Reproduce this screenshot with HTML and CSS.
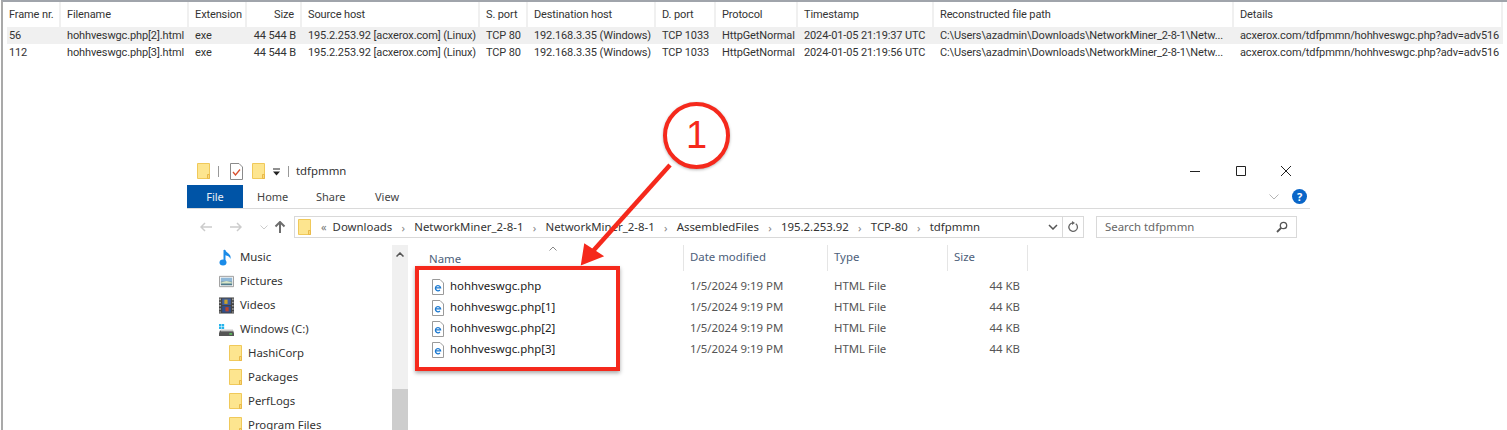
FILE: index.html
```html
<html>
  <head>
    <title>NetworkMiner files</title>
    <meta charset="utf-8">
    <link rel="stylesheet" href="styles.css">
  </head>
  <body>
    <svg class="defs" width="0" height="0">
      <symbol id="folder" viewBox="0 0 14 16">
        <path d="M.5.5h12v15H.5z" fill="#fde58f" stroke="#f0c95a"/>
        <path d="M10.5 11.5h2v4h-2z" fill="#fbd978" stroke="#e9b949"/>
      </symbol>
      <symbol id="htmlfile" viewBox="0 0 12 16">
        <path d="M.5.5h7.5l3.5 3.5v11.5H.5z" fill="#fff" stroke="#9a9a9a"/>
        <path d="M3.4 8.8h5.2a2.6 2.6 0 1 0-.7 2.2" fill="none" stroke="#1a78d0" stroke-width="1.3"/>
      </symbol>
    </svg>

    <div class="page">
      <div class="miner">
        <div class="miner-row miner-head">
          <span>Frame nr.</span><span>Filename</span><span>Extension</span><span class="num">Size</span><span>Source host</span><span>S. port</span><span>Destination host</span><span>D. port</span><span>Protocol</span><span>Timestamp</span><span>Reconstructed file path</span><span>Details</span>
        </div>
        <div class="miner-row miner-sel">
          <span>56</span><span>hohhveswgc.php[2].html</span><span>exe</span><span class="num">44 544 B</span><span>195.2.253.92 [acxerox.com] (Linux)</span><span>TCP 80</span><span>192.168.3.35 (Windows)</span><span>TCP 1033</span><span>HttpGetNormal</span><span>2024-01-05 21:19:37 UTC</span><span>C:\Users\azadmin\Downloads\NetworkMiner_2-8-1\Netw...</span><span>acxerox.com/tdfpmmn/hohhveswgc.php?adv=adv516</span>
        </div>
        <div class="miner-row">
          <span>112</span><span>hohhveswgc.php[3].html</span><span>exe</span><span class="num">44 544 B</span><span>195.2.253.92 [acxerox.com] (Linux)</span><span>TCP 80</span><span>192.168.3.35 (Windows)</span><span>TCP 1033</span><span>HttpGetNormal</span><span>2024-01-05 21:19:56 UTC</span><span>C:\Users\azadmin\Downloads\NetworkMiner_2-8-1\Netw...</span><span>acxerox.com/tdfpmmn/hohhveswgc.php?adv=adv516</span>
        </div>
      </div>

      <div class="explorer">
        <div class="titlebar">
          <svg class="ic-folder"><use href="#folder"/></svg>
          <i class="tsep"></i>
          <svg class="ic-check" viewBox="0 0 13 17"><path d="M.5.5h8.5l3.5 3.500v12.500H.5z" fill="#fff" stroke="#8a8a8a"/><path d="M3 9l2.500 3L10 6.500" fill="none" stroke="#d9502e" stroke-width="1.300"/></svg>
          <svg class="ic-folder"><use href="#folder"/></svg>
          <svg class="ic-qat" viewBox="0 0 9 8"><path d="M1 1h7" stroke="#222"/><path d="M1 3.500h7L4.500 7.500z" fill="#222"/></svg>
          <i class="tsep"></i>
          <span class="title-text">tdfpmmn</span>
          <div class="winbtns">
            <svg viewBox="0 0 12 12"><path d="M1 6.500h10" stroke="#222"/></svg>
            <svg viewBox="0 0 12 12"><path d="M1.500 1.500h9v9h-9z" fill="none" stroke="#222"/></svg>
            <svg viewBox="0 0 12 12"><path d="M1 1l10 10M11 1L1 11" stroke="#222"/></svg>
          </div>
        </div>

        <div class="ribbon">
          <span class="tab-file">File</span>
          <span class="tab">Home</span>
          <span class="tab">Share</span>
          <span class="tab">View</span>
          <svg class="ribbon-chev" viewBox="0 0 10 6"><path d="M.5.500l4.500 4.500L9.500.500" fill="none" stroke="#b5b5b5"/></svg>
          <span class="help">?</span>
        </div>

        <div class="navbar">
          <svg class="nav-arrow" viewBox="0 0 12 10"><path d="M12 5H1M5 1L1 5l4 4" fill="none" stroke="#ccc" stroke-width="1.500"/></svg>
          <svg class="nav-arrow" viewBox="0 0 12 10"><path d="M0 5h11M7 1l4 4-4 4" fill="none" stroke="#ccc" stroke-width="1.500"/></svg>
          <svg class="nav-down" viewBox="0 0 8 5"><path d="M.5.500L4 4 7.500.500" fill="none" stroke="#ccc"/></svg>
          <svg class="nav-up" viewBox="0 0 12 12"><path d="M6 12V1M1.500 5.500L6 1l4.500 4.500" fill="none" stroke="#6d6d6d" stroke-width="2"/></svg>
          <div class="address">
            <svg class="ic-folder"><use href="#folder"/></svg>
            <span class="crumb-more">&#171;</span>
            <span>Downloads</span><b class="chev">&#8250;</b>
            <span>NetworkMiner_2-8-1</span><b class="chev">&#8250;</b>
            <span>NetworkMiner_2-8-1</span><b class="chev">&#8250;</b>
            <span>AssembledFiles</span><b class="chev">&#8250;</b>
            <span>195.2.253.92</span><b class="chev">&#8250;</b>
            <span>TCP-80</span><b class="chev">&#8250;</b>
            <span>tdfpmmn</span>
            <svg class="addr-drop" viewBox="0 0 10 6"><path d="M1 1l4 4 4-4" fill="none" stroke="#555" stroke-width="1.500"/></svg>
            <div class="addr-refresh">
              <svg viewBox="0 0 12 12"><path d="M8.800 2.700a4.300 4.300 0 1 1-3-.9" fill="none" stroke="#666" stroke-width="1.300"/><path d="M5 0v4l3-2z" fill="#666"/></svg>
            </div>
          </div>
          <div class="search">
            <span>Search tdfpmmn</span>
            <svg viewBox="0 0 12 12"><circle cx="7.500" cy="4.500" r="3.200" fill="none" stroke="#555" stroke-width="1.300"/><path d="M5 7L1 11" stroke="#555" stroke-width="1.800"/></svg>
          </div>
        </div>

        <div class="body-area">
          <div class="sidebar">
            <div class="side-row">
              <svg class="side-icon" viewBox="0 0 14 17"><path d="M5 1v12" stroke="#1a8be8" stroke-width="2"/><ellipse cx="3.500" cy="13.500" rx="3.500" ry="3" fill="#1a8be8"/><path d="M5 0c1 4 7 4 6 10-1-3-4-3.500-6-4z" fill="#1a8be8"/></svg>
              <span>Music</span>
            </div>
            <div class="side-row">
              <svg class="side-icon" viewBox="0 0 16 12"><path d="M.5.500h15v11H.5z" fill="#f3f3f3" stroke="#9a9a9a"/><path d="M2 2h12v4H2z" fill="#8fb8d8"/><path d="M2 6h12v4H2z" fill="#4f7a8c"/><path d="M2 7l6-1.500L14 7v1H2z" fill="#d8e6c8"/></svg>
              <span>Pictures</span>
            </div>
            <div class="side-row">
              <svg class="side-icon" viewBox="0 0 14 15"><path d="M0 0h14v15H0z" fill="#444"/><path d="M3 1h8v6H3z" fill="#3f5f9f"/><path d="M3 8h8v6H3z" fill="#2f4f8f"/><path d="M5 2h3v4H5z" fill="#c9a227"/><path d="M6 9h3v4H6z" fill="#b8442c"/><path d="M1 1v13M13 1v13" stroke="#ddd" stroke-dasharray="1.500 1.500"/></svg>
              <span>Videos</span>
            </div>
            <div class="side-row">
              <svg class="side-icon" viewBox="0 0 16 14"><path d="M0 1h2.500v2.500H0zM3 1h2.500v2.500H3zM0 4h2.500v2.500H0zM3 4h2.500v2.500H3z" fill="#25b4ec"/><path d="M1 8h14l1 3v3H0v-3z" fill="#555"/><path d="M2 7h13v2H2z" fill="#c8c8c8"/><path d="M11 11h3v1.500h-3z" fill="#5fd35f"/></svg>
              <span>Windows (C:)</span>
            </div>
            <div class="side-row side-sub"><svg class="ic-folder"><use href="#folder"/></svg><span>HashiCorp</span></div>
            <div class="side-row side-sub"><svg class="ic-folder"><use href="#folder"/></svg><span>Packages</span></div>
            <div class="side-row side-sub"><svg class="ic-folder"><use href="#folder"/></svg><span>PerfLogs</span></div>
            <div class="side-row side-sub"><svg class="ic-folder"><use href="#folder"/></svg><span>Program Files</span></div>
          </div>
          <div class="scrollbar">
            <svg viewBox="0 0 8 5"><path d="M.5 4.500L4 1l3.500 3.500" fill="none" stroke="#555" stroke-width="1.500"/></svg>
            <div class="scroll-thumb"></div>
          </div>
          <div class="files">
            <div class="files-head">
              <span class="col-name">Name</span>
              <span class="col-date">Date modified</span>
              <span class="col-type">Type</span>
              <span class="col-size">Size</span>
              <svg class="sort-up" viewBox="0 0 8 5"><path d="M.5 4.500L4 1l3.500 3.500" fill="none" stroke="#888"/></svg>
            </div>
            <div class="file-row">
              <span class="col-name"><svg class="ic-html"><use href="#htmlfile"/></svg>hohhveswgc.php</span>
              <span class="col-date">1/5/2024 9:19 PM</span><span class="col-type">HTML File</span><span class="col-size">44 KB</span>
            </div>
            <div class="file-row">
              <span class="col-name"><svg class="ic-html"><use href="#htmlfile"/></svg>hohhveswgc.php[1]</span>
              <span class="col-date">1/5/2024 9:19 PM</span><span class="col-type">HTML File</span><span class="col-size">44 KB</span>
            </div>
            <div class="file-row">
              <span class="col-name"><svg class="ic-html"><use href="#htmlfile"/></svg>hohhveswgc.php[2]</span>
              <span class="col-date">1/5/2024 9:19 PM</span><span class="col-type">HTML File</span><span class="col-size">44 KB</span>
            </div>
            <div class="file-row">
              <span class="col-name"><svg class="ic-html"><use href="#htmlfile"/></svg>hohhveswgc.php[3]</span>
              <span class="col-date">1/5/2024 9:19 PM</span><span class="col-type">HTML File</span><span class="col-size">44 KB</span>
            </div>
          </div>
        </div>
      </div>

      <!-- annotations on top of the screenshot -->
      <div class="mark-box"></div>
      <div class="mark-circle">1</div>
      <svg class="mark-arrow" viewBox="0 0 120 120" width="120" height="120">
        <path d="M101 9L24 95" stroke="#f5291c" stroke-width="4.5" fill="none"/>
        <path d="M13 108L16 89 33 100z" fill="#f5291c" stroke="#f5291c" stroke-width="2"/>
      </svg>
    </div>
  </body>
</html>
```

FILE: styles.css
```css
* {
  box-sizing: border-box;
}
body {
  margin: 0;
  background: #fff;
  overflow: hidden;
}
.defs {
  position: absolute;
}
.page {
  position: relative;
  width: 1507px;
  height: 430px;
  overflow: hidden;
  border-top: 2px solid #a0a4ab;
  border-left: 2px solid #a9a9a9;
  margin-left: 1px;
  font-family: "Noto Sans", "Open Sans", sans-serif;
  color: #222;
}

/* networkminer table */
.miner {
  padding-left: 4px;
  font-family: Roboto, "Open Sans", sans-serif;
  font-size: 11px;
  letter-spacing: -.12px;
  color: #333;
}
.miner-row {
  display: grid;
  grid-template-columns: 54px 128px 58px 55px 178px 48px 128px 60px 82px 136px 300px 269px;
  height: 17px;
  line-height: 17px;
  width: 1496px;
}
.miner-row span {
  padding-left: 6px;
  white-space: nowrap;
  overflow: hidden;
}
.miner-row span:first-child {
  padding-left: 2px;
}
.miner-row .num {
  text-align: right;
  padding-right: 6px;
}
.miner-head {
  height: 25px;
  line-height: 26px;
}
.miner-head span {
  border-right: 2px solid #f0f0f0;
}
.miner-sel {
  background: #f0f0f0;
}

/* explorer window */
.explorer {
  margin: 98px 0 0 184px;
  width: 1123px;
}
.titlebar {
  display: flex;
  align-items: center;
  height: 24px;
  margin-bottom: 2px;
  padding-left: 10px;
  font-size: 11.4px;
}
.ic-folder {
  width: 14px;
  height: 16px;
  flex: none;
}
.tsep {
  width: 1px;
  height: 11px;
  background: #999;
  margin: 0 11px 0 7px;
}
.ic-check {
  width: 13px;
  height: 17px;
  margin-right: 9px;
}
.ic-qat {
  width: 9px;
  height: 8px;
  margin: 2px 0 0 6px;
}
.titlebar .ic-qat + .tsep {
  margin: 0 7px 0 7px;
}
.title-text {
  margin-bottom: 2px;
  color: #333;
}
.winbtns {
  display: flex;
  gap: 33.5px;
  margin-left: auto;
  margin-right: 18px;
}
.winbtns svg {
  width: 12px;
  height: 12px;
}
.ribbon {
  display: flex;
  align-items: center;
  height: 24px;
  border-bottom: 1px solid #dadada;
  font-size: 11px;
  color: #444;
}
.tab-file {
  width: 56px;
  height: 23px;
  line-height: 23px;
  text-align: center;
  background: #0054a6;
  color: #e8eef5;
}
.tab {
  margin-left: 14px;
  width: 45px;
}
.ribbon-chev {
  width: 10px;
  height: 6px;
  margin-left: auto;
  margin-right: 13px;
}
.help {
  width: 15px;
  height: 15px;
  line-height: 15px;
  margin-right: 3px;
  border-radius: 50%;
  background: #0a66c8;
  color: #fff;
  font-weight: bold;
  font-size: 11px;
  text-align: center;
}
.navbar {
  display: flex;
  align-items: center;
  height: 36px;
  padding-left: 13px;
  font-size: 11.4px;
}
.nav-arrow {
  width: 12px;
  height: 10px;
  margin-right: 18px;
}
.nav-down {
  width: 8px;
  height: 5px;
  margin-right: 6px;
}
.nav-up {
  width: 12px;
  height: 12px;
  margin-right: 8px;
}
.address {
  display: flex;
  align-items: center;
  width: 790px;
  height: 22px;
  padding-left: 3px;
  border: 1px solid #d9d9d9;
  color: #333;
}
.address span,
.search span {
  margin-bottom: 2px;
}
.address .crumb-more {
  margin: 0 6px 2px 9px;
  font-size: 11px;
  color: #777;
}
.chev {
  width: 22px;
  text-align: center;
  font-weight: normal;
  color: #888;
}
.addr-drop {
  width: 10px;
  height: 6px;
  margin-left: auto;
}
.addr-refresh {
  display: flex;
  align-items: center;
  justify-content: center;
  width: 21px;
  height: 20px;
  margin-left: 4px;
  border-left: 1px solid #d9d9d9;
}
.addr-refresh svg {
  width: 12px;
  height: 12px;
}
.search {
  display: flex;
  align-items: center;
  justify-content: space-between;
  width: 201px;
  height: 22px;
  margin-left: 12px;
  padding: 0 8px;
  border: 1px solid #d9d9d9;
  color: #666;
}
.search svg {
  width: 12px;
  height: 12px;
}
.body-area {
  display: flex;
  height: 190px;
}
.sidebar {
  width: 205px;
  padding-left: 32px;
  font-size: 11.4px;
  color: #333;
}
.side-row {
  display: flex;
  align-items: center;
  height: 24px;
}
.side-row span {
  margin-bottom: 2px;
}
.side-icon {
  width: 15px;
  height: 17px;
  margin-right: 6px;
}
.side-sub {
  padding-left: 10px;
}
.side-sub .ic-folder {
  margin-right: 5px;
}
.scrollbar {
  position: relative;
  width: 16px;
  height: 190px;
  background: #f0f0f0;
}
.scrollbar svg {
  display: block;
  width: 8px;
  height: 5px;
  margin: 7px auto 0;
}
.scroll-thumb {
  position: absolute;
  top: 144px;
  left: 0;
  width: 16px;
  height: 46px;
  background: #cdcdcd;
}
.files {
  position: relative;
  flex: 1;
  padding-left: 6px;
  font-size: 11.4px;
  color: #555;
}
.files-head {
  display: flex;
  height: 26px;
  line-height: 23px;
  margin-bottom: 5px;
  color: #4c607a;
}
.files-head span {
  border-right: 1px solid #e5e5e5;
}
.col-name {
  display: flex;
  align-items: center;
  width: 270px;
  padding-left: 15px;
  flex: none;
}
.col-date {
  width: 144px;
  padding-left: 6px;
  flex: none;
}
.col-type {
  width: 120px;
  padding-left: 6px;
  flex: none;
}
.col-size {
  width: 80px;
  padding-right: 8px;
  flex: none;
}
.file-row {
  display: flex;
  height: 21px;
  line-height: 19px;
}
.file-row .col-name {
  height: 19px;
  padding-left: 18px;
  color: #222;
}
.file-row .col-size {
  text-align: right;
}
.files-head .col-size {
  padding-left: 6px;
}
.ic-html {
  width: 12px;
  height: 16px;
  margin-top: 2px;
  margin-right: 6px;
  flex: none;
}
.sort-up {
  position: absolute;
  left: 141px;
  top: 1px;
  width: 8px;
  height: 5px;
}

/* red markup */
.mark-box {
  position: absolute;
  left: 412px;
  top: 264px;
  width: 205px;
  height: 105px;
  border: 4px solid #f5291c;
  box-shadow: 0 2px 4px rgba(0, 0, 0, .35);
}
.mark-circle {
  position: absolute;
  left: 660px;
  top: 100px;
  width: 67px;
  height: 67px;
  border: 4px solid #f5291c;
  border-radius: 50%;
  background: #fff;
  box-shadow: 0 1px 3px rgba(0, 0, 0, .3);
  font-family: "Liberation Sans", sans-serif;
  font-size: 38px;
  line-height: 58px;
  text-align: center;
  color: #f5291c;
}
.mark-arrow {
  position: absolute;
  left: 566px;
  top: 154px;
}
```
